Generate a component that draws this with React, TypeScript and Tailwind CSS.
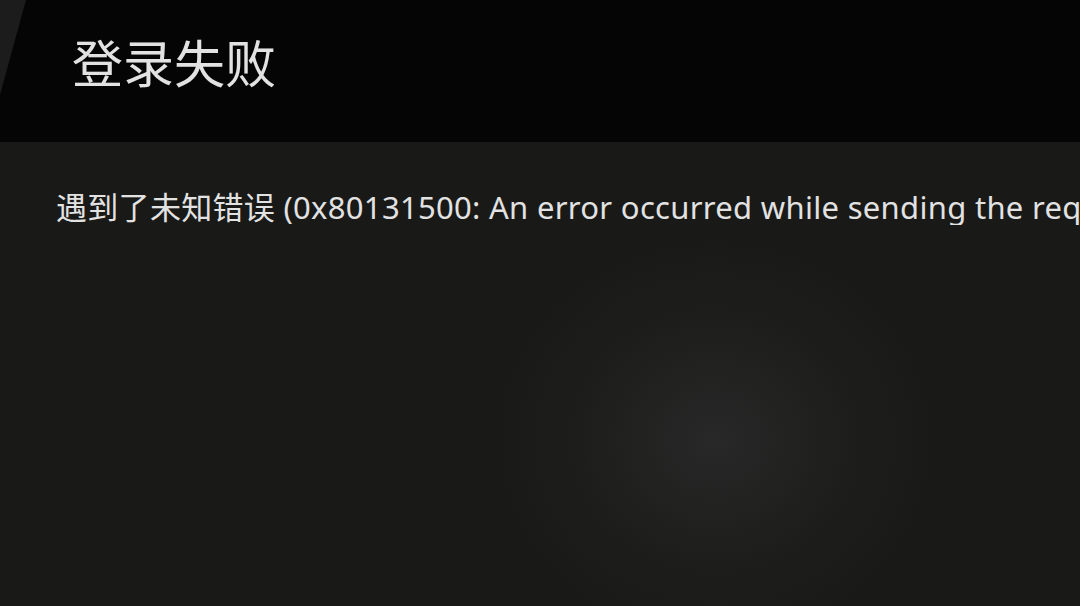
import React from 'react';

const App: React.FC = () => {
  return (
    <div
      className="relative w-[1080px] h-[606px] overflow-hidden bg-[#191918] text-[#e2e2e2]"
      style={{ fontFamily: '"Noto Sans", "Noto Sans CJK SC", sans-serif' }}
    >
      {/* soft glow in the lower middle */}
      <div className="absolute inset-0 bg-[radial-gradient(ellipse_230px_210px_at_715px_440px,#282828_0%,#1d1d1c_60%,rgba(25,25,24,0)_100%)]" />

      <header className="relative h-[142px] bg-[#050505] flex items-center pl-[72px]">
        {/* sliver of lighter panel in the corner */}
        <div className="absolute left-0 top-0 w-[26px] h-[95px] bg-[#1c1c1c] [clip-path:polygon(0_0,100%_0,0_100%)]" />
        <h1 className="text-[51px] leading-none font-normal -mt-[16px]">登录失败</h1>
      </header>

      <main className="relative pt-[47px] pl-[56px]">
        <p className="text-[31px] leading-[36px] tracking-[0.3px] whitespace-nowrap overflow-hidden">
          遇到了未知错误 (0x80131500: An error occurred while sending the request.)
        </p>
      </main>
    </div>
  );
};

export default App;
